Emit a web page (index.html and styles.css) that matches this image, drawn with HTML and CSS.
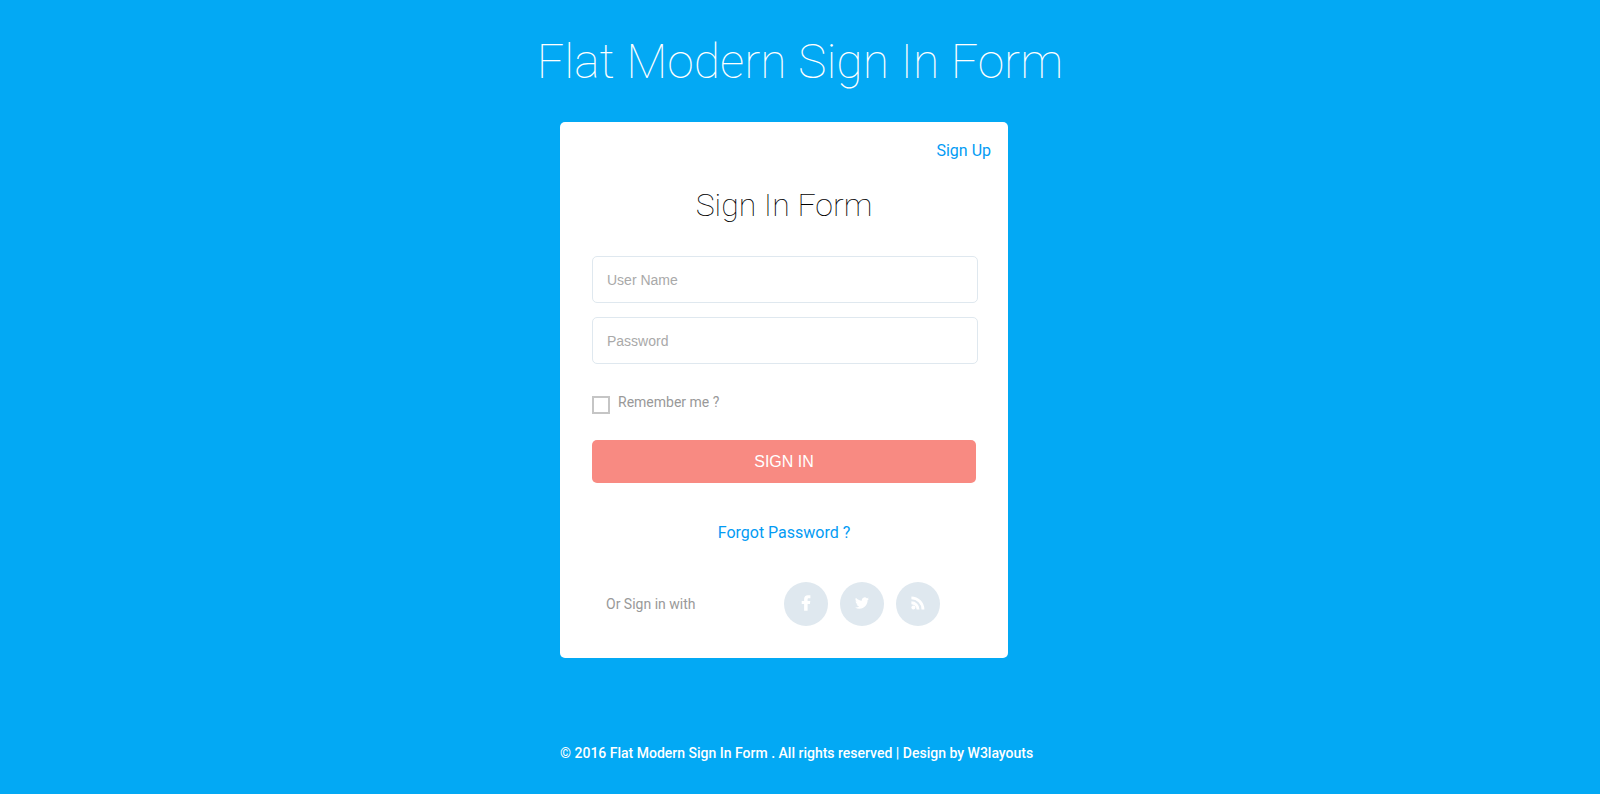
FILE: index.html
```html
<!DOCTYPE html>
<html lang="en">
<head>
<meta charset="utf-8">
<meta name="viewport" content="width=device-width, initial-scale=1">
<title>Flat Modern Sign In Form</title>
<link rel="stylesheet" href="styles.css">
</head>
<body>
<h1 class="page-title">Flat Modern Sign In Form</h1>
<main class="card">
  <div class="card-top"><a class="link" href="#">Sign Up</a></div>
  <h2 class="card-title">Sign In Form</h2>
  <form class="form">
    <input class="field" type="text" placeholder="User Name" aria-label="User Name">
    <input class="field" type="password" placeholder="Password" aria-label="Password">
    <div class="remember">
      <input class="check" type="checkbox" id="remember">
      <label for="remember">Remember me ?</label>
    </div>
    <button class="submit" type="submit">SIGN IN</button>
  </form>
  <p class="forgot"><a class="link" href="#">Forgot Password ?</a></p>
  <div class="social">
    <p class="social-label">Or Sign in with</p>
    <ul class="social-list">
      <li><a class="circle" href="#" aria-label="Facebook"><svg viewBox="0 0 16 16"><path d="M6.100 15.800V9H3.700V6H6.100V4.200C6.100 1.700 7.500.200 9.900.200H12.400V3.200H10.900C9.900 3.200 9.600 3.600 9.600 4.500V6H12.300L11.900 9H9.600V15.800Z"/></svg></a></li>
      <li><a class="circle" href="#" aria-label="Twitter"><svg class="bird" viewBox="0 0 24 24"><path d="M23.950 4.570a10 10 0 0 1-2.820.770 4.960 4.960 0 0 0 2.160-2.720c-.950.550-2 .950-3.130 1.180a4.920 4.920 0 0 0-8.380 4.480C7.690 8.090 4.070 6.130 1.640 3.160a4.920 4.920 0 0 0 1.520 6.570 4.900 4.900 0 0 1-2.230-.610v.060a4.920 4.920 0 0 0 3.950 4.830 5 5 0 0 1-2.210.080 4.940 4.940 0 0 0 4.600 3.420A9.870 9.870 0 0 1 0 19.540a14 14 0 0 0 7.550 2.210c9.050 0 14-7.500 14-13.980 0-.210 0-.420-.020-.630a10 10 0 0 0 2.460-2.550z"/></svg></a></li>
      <li><a class="circle" href="#" aria-label="RSS"><svg viewBox="0 0 16 16"><circle cx="3.400" cy="12.400" r="2"/><path d="M1.400 6.300v2.900a5.200 5.200 0 0 1 5.200 5.200h2.900A8.100 8.100 0 0 0 1.400 6.300ZM1.400 1.400v2.900a10.100 10.100 0 0 1 10.100 10.100h2.900A13 13 0 0 0 1.400 1.400Z"/></svg></a></li>
    </ul>
  </div>
</main>
<footer class="footer">© 2016 Flat Modern Sign In Form . All rights reserved | Design by <a href="#">W3layouts</a></footer>
</body>
</html>
```
FILE: styles.css
```css
* { box-sizing: border-box; }
body {
  margin: 0;
  padding: 32px 0;
  background: #03a9f4;
  font-family: Roboto, "Liberation Sans", sans-serif;
}
h1, h2, p, ul { margin: 0; padding: 0; }
a { text-decoration: none; }
.page-title {
  margin-bottom: 30px;
  color: #fff;
  font-size: 48px;
  font-weight: 100;
  line-height: 60px;
  text-align: center;
}
.card {
  width: 28%;
  min-width: 320px;
  margin-left: 35%;
  padding: 19px 32px 32px;
  border-radius: 5px;
  background: #fff;
}
.card-top { margin-right: -15px; line-height: 20px; text-align: right; }
.link { color: #039bf4; font-size: 16px; line-height: 20px; }
.card-title {
  margin: 24px 0 31px;
  color: #000;
  font-size: 32px;
  font-weight: 100;
  line-height: 40px;
  text-align: center;
}
.form { display: flex; flex-direction: column; }
.field {
  width: calc(100% + 2px);
  height: 47px;
  margin-bottom: 14px;
  padding: 0 14px;
  border: 1px solid #dfe8ef;
  border-radius: 5px;
  background: #fff;
  font: 14px "Liberation Sans", Arial, sans-serif;
}
.field::placeholder { color: #a9a9a9; opacity: 1; }
.remember {
  display: flex;
  align-items: flex-end;
  gap: 8px;
  margin: 12px 0 26px;
  color: #999;
  font-size: 14px;
  line-height: 24px;
}
.check {
  width: 18px;
  height: 18px;
  margin: 0;
  border: 2px solid #c5c5c5;
  background: #fff;
  appearance: none;
}
.check:checked { background: #c5c5c5; }
.submit {
  height: 43px;
  border: 0;
  border-radius: 5px;
  background: #f88a82;
  color: #fff;
  font: 16px "Liberation Sans", Arial, sans-serif;
}
.forgot { margin-top: 40px; line-height: 20px; text-align: center; }
.social {
  display: flex;
  align-items: center;
  justify-content: space-between;
  margin: 39px 36px 0 14px;
}
.social-label { color: #999; font-size: 14px; line-height: 20px; }
.social-list { display: flex; gap: 12px; list-style: none; }
.circle {
  display: flex;
  align-items: center;
  justify-content: center;
  width: 44px;
  height: 44px;
  padding-bottom: 2px;
  border-radius: 50%;
  background: #dfe8ef;
}
.circle svg { width: 16px; height: 16px; fill: #fff; }
.circle .bird { width: 14px; height: 14px; }
.footer {
  margin: 85px 35% 0;
  color: #fff;
  font-size: 14px;
  font-weight: 500;
  line-height: 20px;
  white-space: nowrap;
}
.footer a { color: inherit; }
```
